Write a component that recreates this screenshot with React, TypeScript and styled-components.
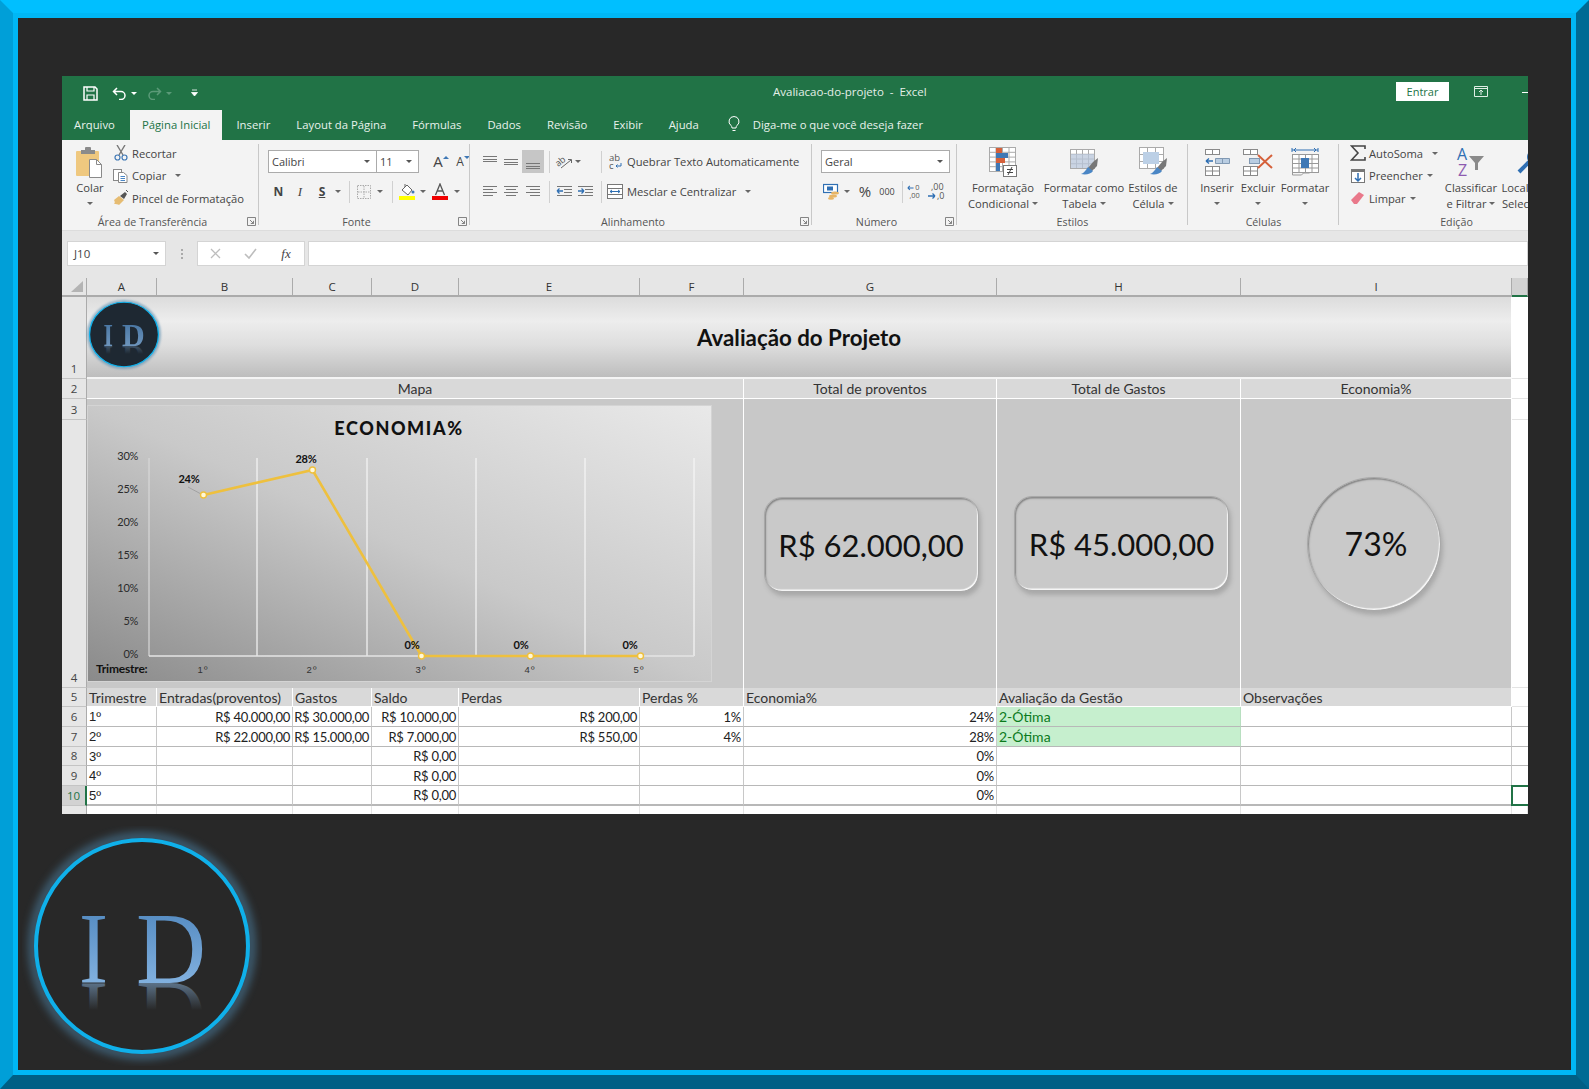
import React from 'react';
import styled, { createGlobalStyle } from 'styled-components';

const Global = createGlobalStyle`
  html, body { margin: 0; padding: 0; width: 1589px; height: 1089px; overflow: hidden; background: #282828; }
  * { box-sizing: border-box; }
`;

const UI = `"Open Sans", "Noto Sans", sans-serif`;
const CELL = `Lato, "Open Sans", sans-serif`;

const Bevel = styled.div`
  width: 1589px; height: 1089px;
  border-style: solid;
  border-width: 13px 13px 14px 13px;
  border-color: #00bfff #006a94 #005f85 #009fd8;
`;
const Stage = styled.div`
  height: 100%;
  border: 5px solid #00b7f5;
  background: #282828;
  padding: 58px 0 0 44px;
`;
const Win = styled.div`
  width: 1466px; height: 738px; overflow: hidden; background: #e6e6e6;
  font-family: ${UI}; color: #444; display: flex; flex-direction: column;
`;
const TitleBar = styled.div`
  height: 34px; flex: none; background: #217346; display: flex; align-items: center; position: relative; color: #fff;
`;
const Qat = styled.div`display: flex; align-items: center; padding: 0 0 0 20px;`;
const QatSlot = styled.span<{ $w: number; $ml?: number }>`
  width: ${p => p.$w}px; margin-left: ${p => p.$ml ?? 0}px; display: flex; justify-content: center; align-items: center;
`;
const DocTitle = styled.div`
  position: absolute; left: 711px; top: 7px; font-size: 11.5px; line-height: 17px; color: #e4efe8; white-space: pre;
`;
const SignIn = styled.div`
  position: absolute; left: 1334px; top: 6px; width: 53px; height: 19px; background: #fff; color: #217346;
  font-size: 11px; line-height: 19px; text-align: center;
`;
const WinButtons = styled.div`position: absolute; left: 1412px; top: 9px; display: flex; align-items: center;`;
const Minimize = styled.span`position: absolute; left: 48px; top: 7px; width: 8px; height: 1px; background: #fff;`;
const TabBar = styled.div`
  height: 30px; flex: none; background: #217346; display: flex; align-items: stretch; font-size: 11.3px; color: #e8f2ec; white-space: nowrap;
`;
const Tab = styled.div<{ $left: number; $active?: boolean }>`
  margin-left: ${p => p.$left}px;
  padding: 0 ${p => (p.$active ? 12 : 0)}px 2px;
  display: flex; align-items: center;
  ${p => p.$active ? 'background:#f3f3f3;color:#217346;' : ''}
`;
const Ribbon = styled.div`
  height: 91px; flex: none; background: #f3f3f3; display: flex; border-bottom: 1px solid #dcdcdc;
  font-size: 11.2px; color: #444; white-space: nowrap;
`;
const Group = styled.div<{ $w: number; $noLine?: boolean }>`
  position: relative; flex: none; width: ${p => p.$w}px; display: flex; flex-direction: column;
  ${p => p.$noLine ? '' : `&::after { content: ''; position: absolute; right: 0; top: 4px; bottom: 5px; width: 1px; background: #c8c8c8; }`}
`;
const GroupBody = styled.div<{ $pl: number; $pt?: number; $col?: boolean }>`
  flex: 1; display: flex; ${p => p.$col ? 'flex-direction: column;' : ''} padding: ${p => p.$pt ?? 0}px 0 0 ${p => p.$pl}px; min-height: 0;
`;
const GroupLabel = styled.div<{ $launcher?: boolean }>`
  height: 18px; flex: none; text-align: center; line-height: 18px; padding-top: 1px; font-size: 10.7px; color: #555;
  padding-right: ${p => (p.$launcher ? 16 : 0)}px;
`;
const Launcher = styled.svg`position: absolute; right: 3px; bottom: 4px; width: 9px; height: 9px;`;
const BigButton = styled.div<{ $w: number }>`
  width: ${p => p.$w}px; flex: none; padding-top: 7px; display: flex; flex-direction: column; align-items: center; text-align: center; line-height: 15.5px;
`;
const BigIcon = styled.div`height: 30px; margin-bottom: 3px; display: flex; align-items: center; justify-content: center;`;
const SmallCol = styled.div<{ $ml: number; $w?: number }>`
  margin-left: ${p => p.$ml}px; padding-top: 2px; display: grid; grid-auto-rows: 22.5px; ${p => p.$w ? `width:${p.$w}px;flex:none;` : ''}
`;
const SmallBtn = styled.div`display: flex; align-items: center;`;
const SmallIcon = styled.span`width: 16px; height: 16px; margin-right: 3px; display: flex; align-items: center; justify-content: center; flex: none;`;
const Caret = styled.i<{ $ml?: number; $mt?: number; $dark?: boolean }>`
  display: inline-block; width: 0; height: 0; border-left: 3px solid transparent; border-right: 3px solid transparent;
  border-top: 3px solid ${p => p.$dark ? '#555' : '#666'}; margin-left: ${p => p.$ml ?? 0}px; margin-top: ${p => p.$mt ?? 0}px; flex: none;
  vertical-align: middle;
`;
const UpMark = styled.i`
  width: 0; height: 0; border-left: 3px solid transparent; border-right: 3px solid transparent; margin-bottom: 9px;
  border-bottom: 3px solid #3f78b5;
`;
const DownMark = styled.i`
  width: 0; height: 0; border-left: 3px solid transparent; border-right: 3px solid transparent; margin-bottom: 9px;
  border-top: 3px solid #3f78b5;
`;
const CaretLine = styled.div`height: 15px; display: flex; align-items: center; justify-content: center;`;
const ToolRow = styled.div<{ $mt?: number }>`
  display: flex; align-items: center; height: 23px; margin-top: ${p => p.$mt ?? 0}px;
`;
const Tool = styled.span<{ $w: number; $ml?: number; $on?: boolean }>`
  width: ${p => p.$w}px; margin-left: ${p => p.$ml ?? 0}px; height: 23px; flex: none; display: flex; align-items: center; justify-content: center;
  ${p => p.$on ? 'background:#c6c6c6;' : ''}
`;
const Sep = styled.span<{ $w: number; $ml?: number }>`
  width: ${p => p.$w}px; margin-left: ${p => p.$ml ?? 0}px; height: 22px; flex: none; position: relative;
  &::after { content: ''; position: absolute; left: 50%; top: 0; bottom: 0; width: 1px; background: #d0d0d0; }
`;
const Select = styled.div<{ $w: number; $joined?: boolean }>`
  width: ${p => p.$w}px; height: 23px; flex: none; background: #fff; border: 1px solid #ababab; ${p => p.$joined ? 'border-left: none;' : ''}
  display: flex; align-items: center; justify-content: space-between; padding: 0 6px 0 3px; font-size: 11px; color: #444;
`;
const ToolLabel = styled.span`margin-left: 3px; color: #444;`;
const Glyph = styled.span<{ $size?: number; $bold?: boolean; $italic?: boolean; $u?: boolean; $serif?: boolean }>`
  font-size: ${p => p.$size ?? 12}px; font-weight: ${p => p.$bold ? 700 : 400}; font-style: ${p => p.$italic ? 'italic' : 'normal'};
  ${p => p.$u ? 'text-decoration: underline;' : ''} ${p => p.$serif ? 'font-family: "Liberation Serif", serif;' : ''} color: #444; line-height: 1;
`;

const Band = styled.div`
  height: 47px; flex: none; background: #e6e6e6; padding-top: 10px; display: flex; align-items: flex-start;
`;
const NameBox = styled.div`
  margin-left: 5px; width: 99px; height: 25px; background: #fff; border: 1px solid #d4d4d4; display: flex; align-items: center; justify-content: space-between;
  padding: 0 6px; font-size: 11.5px; color: #444; flex: none;
`;
const Dots = styled.div`width: 31px; height: 25px; flex: none; display: flex; flex-direction: column; align-items: center; justify-content: center; gap: 2px;
  span { width: 2px; height: 2px; background: #aaa; }
`;
const FxBox = styled.div`
  width: 108px; height: 25px; flex: none; background: #fff; border: 1px solid #d4d4d4; display: flex; align-items: center; padding-left: 10px;
`;
const FxSlot = styled.span<{ $w: number; $ml?: number }>`
  width: ${p => p.$w}px; margin-left: ${p => p.$ml ?? 0}px; flex: none; display: flex; justify-content: center; align-items: center;
`;
const FormulaInput = styled.div`margin-left: 3px; flex: 1; height: 25px; background: #fff; border: 1px solid #d4d4d4;`;

const Sheet = styled.div`
  display: grid;
  grid-template-columns: 25px 70px 136px 79px 87px 181px 104px 253px 244px 271px 16px;
  grid-template-rows: 19px 82px 20px 21px 268px 19px 20px 20px 19px 20px 20px 8px;
  background: #fff; font-family: ${CELL}; font-size: 14px; color: #222;
`;
const Corner = styled.div`
  background: #e6e6e6; border-bottom: 2px solid #ababab; border-right: 1px solid #ababab; position: relative;
  &::after { content: ''; position: absolute; right: 3px; bottom: 3px; width: 12px; height: 11px; background: #b4b4b4; clip-path: polygon(100% 0, 100% 100%, 0 100%); }
`;
const ColHead = styled.div<{ $sel?: boolean }>`
  background: ${p => p.$sel ? '#d2d2d2' : '#e6e6e6'};
  border-bottom: 2px solid ${p => p.$sel ? '#217346' : '#ababab'}; border-right: 1px solid #ababab;
  display: flex; align-items: center; justify-content: center; font-family: ${UI}; font-size: 11.5px; color: #333;
`;
const RowHead = styled.div<{ $sel?: boolean }>`
  background: ${p => p.$sel ? '#d2d2d2' : '#e6e6e6'};
  border-bottom: 1px solid #c4c4c4; border-right: ${p => p.$sel ? '2px solid #217346' : '1px solid #ababab'};
  color: ${p => p.$sel ? '#217346' : '#444'};
  display: flex; align-items: flex-end; justify-content: center; font-family: ${UI}; font-size: 11.5px; line-height: 18px;
`;
const Banner = styled.div`
  grid-column: span 9; position: relative; border-right: 1px solid #fff; border-bottom: 2px solid #f4f4f4;
  background: linear-gradient(180deg, #dcdcdc 0%, #ededed 30%, #dedede 60%, #bdbdbd 100%);
  display: flex; align-items: center; justify-content: center;
  font-size: 22.3px; font-weight: 700; color: #111;
`;
const SmallLogo = styled.div`position: absolute; left: -2px; top: 1px;`;
const HeadCell = styled.div<{ $span?: number; $left?: boolean }>`
  ${p => p.$span ? `grid-column: span ${p.$span};` : ''}
  background: #d9d9d9; border-right: 1px solid #fff; border-bottom: 1px solid #fff;
  display: flex; align-items: center; justify-content: ${p => p.$left ? 'flex-start' : 'center'};
  padding: 0 2px; color: #333; white-space: nowrap; overflow: hidden;
`;
const Empty = styled.div<{ $line?: string }>`background: #fff; border-bottom: 1px solid ${p => p.$line ?? '#e4e4e4'};`;
const ChartCell = styled.div`
  grid-column: span 6; grid-row: span 2; background: #c8c8c8; border-right: 1px solid #fff; padding-top: 6px;
`;
const ChartCard = styled.div`
  width: 625px; height: 277px; border: 1px solid #d4d4d4;
  background: linear-gradient(to top right, #8a8a8a 0%, #c9c9c9 50%, #e9e9e9 100%);
`;
const KpiCell = styled.div`
  grid-row: span 2; background: #c8c8c8; border-right: 1px solid #fff; display: flex; align-items: center; justify-content: center;
`;
const Kpi = styled.div<{ $w: number; $h: number; $round?: boolean; $dx?: number; $dy?: number }>`
  width: ${p => p.$w}px; height: ${p => p.$h}px; border-radius: ${p => p.$round ? '50%' : '18px'};
  margin: ${p => (p.$dy ?? 0) * 2}px 0 0 ${p => (p.$dx ?? 0) * 2}px;
  padding-left: ${p => p.$round ? 4 : 0}px;
  background: #c9c9c9; border: 1px solid #a8a8a8;
  box-shadow: inset 1px 1.5px 1.5px rgba(70,70,70,.5), inset -1px -1.5px 1px rgba(255,255,255,.9), 2px 4px 4px rgba(130,130,130,.45);
  display: flex; align-items: center; justify-content: center; font-size: ${p => p.$round ? 32 : 31}px; color: #111;
`;
const Cell = styled.div<{ $num?: boolean; $good?: boolean; $heavy?: boolean }>`
  background: ${p => p.$good ? '#c6efce' : '#fff'}; color: ${p => p.$good ? '#0b7a1c' : '#222'};
  border-right: 1px solid ${p => p.$good ? '#b8dfc0' : '#c8c8c8'}; border-bottom: ${p => p.$heavy ? 2 : 1}px solid #b8b8b8;
  display: flex; align-items: center; justify-content: ${p => p.$num ? 'flex-end' : 'flex-start'};
  padding: 0 2px; white-space: nowrap; overflow: hidden;
  ${p => p.$num ? 'font-size: 13px; letter-spacing: -0.25px;' : ''}
`;
const Ordinal = styled.span`font-family: "Liberation Sans", sans-serif; font-size: 13px;`;
const Selected = styled.div`background: #fff; border: 2px solid #217346; border-right: none; margin: -1px 0 0 -1px;`;
const Stub = styled.div`background: #fff; border-right: 1px solid #e4e4e4;`;
const StubHead = styled.div`background: #e6e6e6; border-right: 1px solid #ababab;`;
const BigLogo = styled.div`margin: 12px 0 0 -40px;`;

const Logo = ({ id, w, h, fill, dim }: { id: string; w: number; h: number; fill: string; dim?: boolean }) => (
  <svg width={w} height={h} viewBox="0 0 240 240" preserveAspectRatio="none">
    <defs>
      <linearGradient id={`${id}-l`} x1="0" y1="0" x2="0" y2="1">
        <stop offset="0" stopColor="#4a82ba" /><stop offset="1" stopColor="#8fbce8" />
      </linearGradient>
      <linearGradient id={`${id}-r`} gradientUnits="userSpaceOnUse" x1="0" y1="157" x2="0" y2="130">
        <stop offset="0" stopColor="#8fbce8" stopOpacity={dim ? '.3' : '.5'} /><stop offset="1" stopColor="#8fbce8" stopOpacity="0" />
      </linearGradient>
      <filter id={`${id}-g`} x="-20%" y="-20%" width="140%" height="140%"><feGaussianBlur stdDeviation="4" /></filter>
    </defs>
    <circle cx="120" cy="120" r="109" fill="none" stroke="#4f88ad" strokeWidth="9" opacity=".6" filter={`url(#${id}-g)`} />
    <circle cx="120" cy="120" r="106" fill={fill} stroke="#0fb0ea" strokeWidth="4" />
    <g fontFamily="'Liberation Serif', serif" fontSize="101" fill={`url(#${id}-l)`} opacity={dim ? .8 : 1}>
      <text x="57" y="157" textLength="29" lengthAdjust="spacingAndGlyphs">I</text>
      <text x="114" y="157" textLength="70" lengthAdjust="spacingAndGlyphs">D</text>
    </g>
    <g transform="translate(0 314) scale(1 -1)" fontFamily="'Liberation Serif', serif" fontSize="101" fill={`url(#${id}-r)`}>
      <text x="57" y="157" textLength="29" lengthAdjust="spacingAndGlyphs">I</text>
      <text x="114" y="157" textLength="70" lengthAdjust="spacingAndGlyphs">D</text>
    </g>
  </svg>
);

const Lnch = () => (
  <Launcher viewBox="0 0 9 9"><path d="M.5.5h8v8h-8zM3 3l3.5 3.5M6.500 3.800v2.700H3.800" fill="none" stroke="#777" strokeWidth=".9" /></Launcher>
);
const Ic = ({ w = 16, h = 16, children }: { w?: number; h?: number; children: React.ReactNode }) => (
  <svg width={w} height={h} viewBox={`0 0 ${w} ${h}`} fill="none">{children}</svg>
);
const Lines = ({ rows }: { rows: [number, number, number][] }) => (
  <Ic>{rows.map(([y, x, len], i) => <path key={i} d={`M${x} ${y}h${len}`} stroke="#777" strokeWidth="1" />)}</Ic>
);
const Grid = ({ x, y, w, h, cx, cy, s = '#8a8a8a' }: { x: number; y: number; w: number; h: number; cx: number; cy: number; s?: string }) => (
  <g stroke={s} strokeWidth="1">
    <rect x={x + .5} y={y + .5} width={w} height={h} fill="#fff" />
    {Array.from({ length: cx - 1 }, (_, i) => <path key={`a${i}`} d={`M${x + .5 + (w * (i + 1)) / cx} ${y}v${h}`} />)}
    {Array.from({ length: cy - 1 }, (_, i) => <path key={`b${i}`} d={`M${x} ${y + .5 + (h * (i + 1)) / cy}h${w}`} />)}
  </g>
);
const Brush = ({ x, y }: { x: number; y: number }) => (
  <g transform={`translate(${x} ${y})`}>
    <path d="M16 0l-1 8-5 5-4-3 5-6z" fill="#777" />
    <path d="M6 9l5 4c-2 3-7 4-12 3 3-1 5-4 7-7z" fill="#4a86c5" />
  </g>
);
const Dec = ({ top, bottom, dir }: { top: string; bottom: string; dir: 'l' | 'r' }) => (
  <Ic w={22} h={18}>
    <path d={dir === 'l' ? 'M1 4h7M1 4l2.500-2.500M1 4l2.500 2.500' : 'M1 13h7M8 13l-2.500-2.500M8 13l-2.500 2.500'} stroke="#2f6fb3" strokeWidth="1.300" />
    <text x={dir === 'l' ? 10 : 4} y="7" fontFamily="Open Sans, sans-serif" fontSize="9" fill="#555">{top}</text>
    <text x={dir === 'l' ? 3 : 10} y="16" fontFamily="Open Sans, sans-serif" fontSize="9" fill="#555">{bottom}</text>
  </Ic>
);

const rows = [
  { n: 6, a: '1º', b: 'R$ 40.000,00', c: 'R$ 30.000,00', d: 'R$ 10.000,00', e: 'R$ 200,00', f: '1%', g: '24%', h: '2-Ótima' },
  { n: 7, a: '2º', b: 'R$ 22.000,00', c: 'R$ 15.000,00', d: 'R$ 7.000,00', e: 'R$ 550,00', f: '4%', g: '28%', h: '2-Ótima' },
  { n: 8, a: '3º', b: '', c: '', d: 'R$ 0,00', e: '', f: '', g: '0%', h: '' },
  { n: 9, a: '4º', b: '', c: '', d: 'R$ 0,00', e: '', f: '', g: '0%', h: '' },
  { n: 10, a: '5º', b: '', c: '', d: 'R$ 0,00', e: '', f: '', g: '0%', h: '' },
];

const Chart = () => {
  const gx = [61, 169, 279, 388, 497, 606];
  const yl = ['30%', '25%', '20%', '15%', '10%', '5%', '0%'];
  const pts = [[115.5, 89], [224.5, 64], [333.5, 250], [442.5, 250], [552.5, 250]];
  const lab = [['24%', 101, 73], ['28%', 218, 53], ['0%', 324, 239], ['0%', 433, 239], ['0%', 542, 239]];
  return (
    <svg width="623" height="275" viewBox="0 0 623 275" fontFamily="Lato, sans-serif">
      <text x="311" y="29" textAnchor="middle" fontSize="18" fontWeight="900" letterSpacing="1.600" fill="#111">ECONOMIA%</text>
      {gx.map((x, i) => <path key={x} d={`M${x} 52V250`} stroke={i === 0 ? '#d8d8d8' : '#f6f6f6'} strokeWidth="1.200" />)}
      <path d="M61 250H606" stroke="#e4e4e4" strokeWidth="1.500" />
      {yl.map((t, i) => <text key={t} x="50" y={54 + i * 33} textAnchor="end" fontSize="11" fill="#2a2a2a" letterSpacing="-.3">{t}</text>)}
      <path d="M100 81L113 88" stroke="#999" strokeWidth=".8" />
      <polyline points={pts.map(p => p.join(',')).join(' ')} fill="none" stroke="#eec03e" strokeWidth="2.600" />
      {pts.map(([x, y]) => <circle key={x} cx={x} cy={y} r="3" fill="#fff8d8" stroke="#eec03e" strokeWidth="1.400" />)}
      {lab.map(([t, x, y], i) => <text key={i} x={x as number} y={(y as number) + 4} textAnchor="middle" fontSize="11" fontWeight="700" fill="#111" letterSpacing="-.2">{t}</text>)}
      <text x="8" y="267" fontSize="12" fontWeight="700" fill="#111" letterSpacing="-.2">Trimestre:</text>
      {['1º', '2º', '3º', '4º', '5º'].map((t, i) => <text key={t} x={115 + i * 109} y="267" textAnchor="middle" fontFamily="Liberation Sans, sans-serif" fontSize="9.500" fill="#333" letterSpacing="1">{t}</text>)}
    </svg>
  );
};

export default function App() {
  return (
    <>
      <Global />
      <Bevel>
        <Stage>
          <Win>
            <TitleBar>
              <Qat>
                <QatSlot $w={16}>
                  <Ic w={15} h={15}><path d="M1 1h11l2 2v11H1z" stroke="#fff" strokeWidth="1.500" /><path d="M4 1v4h7V1M4 14V9h7v5" stroke="#fff" strokeWidth="1.200" /></Ic>
                </QatSlot>
                <QatSlot $w={20} $ml={11}>
                  <Ic w={15} h={14}><path d="M5 2L1.500 5.500 5 9M2 5.500h7a4 4 0 0 1 0 8H7" stroke="#fff" strokeWidth="1.500" /></Ic>
                </QatSlot>
                <QatSlot $w={10}><Caret style={{ borderTopColor: '#fff' }} /></QatSlot>
                <QatSlot $w={20} $ml={5}>
                  <Ic w={15} h={14}><path d="M10 2l3.500 3.500L10 9M13 5.500H6a4 4 0 0 0 0 8h2" stroke="#5b9a78" strokeWidth="1.500" /></Ic>
                </QatSlot>
                <QatSlot $w={10}><Caret style={{ borderTopColor: '#5b9a78' }} /></QatSlot>
                <QatSlot $w={10} $ml={15}>
                  <Ic w={7} h={8}><path d="M1 1h5M.5 3.500h6l-3 3.500z" stroke="#fff" fill="#fff" strokeWidth=".8" /></Ic>
                </QatSlot>
              </Qat>
              <DocTitle>Avaliacao-do-projeto  -  Excel</DocTitle>
              <SignIn>Entrar</SignIn>
              <WinButtons>
                <Ic w={14} h={12}><path d="M.5 1.500h13v10H.5zM.5 3.500h13" stroke="#dfeee5" /><path d="M7 10V5M5 7l2-2 2 2" stroke="#dfeee5" /></Ic>
                <Minimize />
              </WinButtons>
            </TitleBar>
            <TabBar>
              <Tab $left={12}>Arquivo</Tab>
              <Tab $left={15} $active>Página Inicial</Tab>
              <Tab $left={14}>Inserir</Tab>
              <Tab $left={26}>Layout da Página</Tab>
              <Tab $left={26}>Fórmulas</Tab>
              <Tab $left={26}>Dados</Tab>
              <Tab $left={26}>Revisão</Tab>
              <Tab $left={26}>Exibir</Tab>
              <Tab $left={26}>Ajuda</Tab>
              <Tab $left={28}>
                <Ic w={14} h={18}><path d="M7 1.500a5 5 0 0 0-3 9c.6.6 1 1.500 1 2.500h4c0-1 .4-1.900 1-2.500a5 5 0 0 0-3-9zM5.500 15.500h3" stroke="#fff" strokeWidth="1" /></Ic>
              </Tab>
              <Tab $left={12}>Diga-me o que você deseja fazer</Tab>
            </TabBar>
            <Ribbon>
              <Group $w={197}>
                <GroupBody $pl={12}>
                  <BigButton $w={32}>
                    <BigIcon>
                      <Ic w={30} h={31}>
                        <rect x="1" y="4" width="23" height="25" rx="1" fill="#efc87f" />
                        <rect x="10" y="0" width="6" height="5" rx="1" fill="#8b8b8b" /><rect x="6" y="3" width="14" height="4" fill="#8b8b8b" />
                        <path d="M14.500 12.500h7l5 5v13h-12z" fill="#fff" stroke="#8a8a8a" /><path d="M21.500 12.500v5h5" stroke="#8a8a8a" />
                      </Ic>
                    </BigIcon>
                    <span>Colar</span>
                    <CaretLine><Caret /></CaretLine>
                  </BigButton>
                  <SmallCol $ml={7}>
                    <SmallBtn><SmallIcon>
                      <Ic><path d="M4 0l6 10M12 0L6 10" stroke="#777" strokeWidth="1.400" /><circle cx="4.500" cy="12.500" r="2.500" stroke="#3f78b5" strokeWidth="1.200" /><circle cx="11.500" cy="12.500" r="2.500" stroke="#3f78b5" strokeWidth="1.200" /></Ic>
                    </SmallIcon>Recortar</SmallBtn>
                    <SmallBtn><SmallIcon>
                      <Ic><rect x=".5" y="1.500" width="8" height="11" fill="#fff" stroke="#888" /><path d="M5.500 4.500h5l3.500 3v7h-8.500z" fill="#fff" stroke="#888" /><path d="M7.500 8.500h4.500M7.500 10.500h4.500M7.500 12.500h4.500" stroke="#4a86c5" /></Ic>
                    </SmallIcon>Copiar<Caret $ml={9} /></SmallBtn>
                    <SmallBtn><SmallIcon>
                      <Ic><path d="M1 10l5-4 5 4-5 5c-1-1-3-1-5-1 1-1 1-2 0-4z" fill="#e6bc72" /><path d="M7 6l5-4 2 2-3 5z" fill="#555" /><path d="M13 0l2 2" stroke="#555" /></Ic>
                    </SmallIcon>Pincel de Formatação</SmallBtn>
                  </SmallCol>
                </GroupBody>
                <GroupLabel $launcher>Área de Transferência</GroupLabel>
                <Lnch />
              </Group>
              <Group $w={211}>
                <GroupBody $pl={9} $pt={10} $col>
                  <ToolRow>
                    <Select $w={109}>Calibri<Caret $dark /></Select>
                    <Select $w={42} $joined>11<Caret $dark /></Select>
                    <Tool $w={11} />
                    <Tool $w={22}><Glyph $size={15}>A</Glyph><UpMark /></Tool>
                    <Tool $w={22}><Glyph $size={12}>A</Glyph><DownMark /></Tool>
                  </ToolRow>
                  <ToolRow $mt={7}>
                    <Tool $w={21}><Glyph $bold>N</Glyph></Tool>
                    <Tool $w={22}><Glyph $italic $serif $size={13}>I</Glyph></Tool>
                    <Tool $w={22}><Glyph $bold $u>S</Glyph></Tool>
                    <Tool $w={10}><Caret /></Tool>
                    <Sep $w={12} />
                    <Tool $w={18}><Ic w={14} h={14}><rect x=".5" y=".5" width="13" height="13" stroke="#aaa" strokeDasharray="1.500 1" /><path d="M7 1v12M1 7h12" stroke="#aaa" strokeDasharray="1.500 1" /></Ic></Tool>
                    <Tool $w={14}><Caret /></Tool>
                    <Sep $w={10} />
                    <Tool $w={20}><Ic w={17} h={17}><path d="M3 7l5-5 5 5-4 5z" fill="#fff" stroke="#666" /><path d="M6 4V1" stroke="#666" /><circle cx="14" cy="9" r="1.500" fill="#3f78b5" /><rect x="0" y="13" width="16" height="4" fill="#ffff00" /></Ic></Tool>
                    <Tool $w={12}><Caret /></Tool>
                    <Tool $w={22}><Ic w={17} h={17}><rect x="0" y="13" width="16" height="4" fill="#f00000" /><path d="M3.500 12L8 1l4.500 11M5.500 8h5" stroke="#555" strokeWidth="1.300" /></Ic></Tool>
                    <Tool $w={12}><Caret /></Tool>
                  </ToolRow>
                </GroupBody>
                <GroupLabel $launcher>Fonte</GroupLabel>
                <Lnch />
              </Group>
              <Group $w={342}>
                <GroupBody $pl={9} $pt={10} $col>
                  <ToolRow>
                    <Tool $w={21}><Lines rows={[[2.5, 1, 14], [5.5, 1, 14], [7.5, 1, 14]]} /></Tool>
                    <Tool $w={22}><Lines rows={[[5.5, 1, 14], [8.5, 1, 14], [10.5, 1, 14]]} /></Tool>
                    <Tool $w={22} $on><Lines rows={[[9.5, 1, 14], [12.5, 1, 14], [14.5, 1, 14]]} /></Tool>
                    <Sep $w={10} />
                    <Tool $w={20}>
                      <Ic w={18} h={16}>
                        <text x="1" y="11" transform="rotate(-40 5 9)" fontFamily="Open Sans, sans-serif" fontSize="9" fill="#555">ab</text>
                        <path d="M6 14l10-8M13 5.500h3.500V9" stroke="#666" />
                      </Ic>
                    </Tool>
                    <Tool $w={8}><Caret /></Tool>
                    <Sep $w={14} $ml={12} />
                    <Tool $w={16}>
                      <Ic w={16} h={18}>
                        <text x="1" y="8" fontFamily="Open Sans, sans-serif" fontSize="9.500" fill="#555">ab</text>
                        <text x="1" y="16" fontFamily="Open Sans, sans-serif" fontSize="9.500" fill="#555">c</text>
                        <path d="M13 10v3h-5M8 13l1.500-1.500M8 13l1.500 1.500" stroke="#2f6fb3" />
                      </Ic>
                    </Tool>
                    <ToolLabel>Quebrar Texto Automaticamente</ToolLabel>
                  </ToolRow>
                  <ToolRow $mt={7}>
                    <Tool $w={21}><Lines rows={[[2.5, 1, 14], [5.5, 1, 10], [8.5, 1, 14], [11.5, 1, 10]]} /></Tool>
                    <Tool $w={22}><Lines rows={[[2.5, 1, 14], [5.5, 3, 10], [8.5, 1, 14], [11.5, 3, 10]]} /></Tool>
                    <Tool $w={22}><Lines rows={[[2.5, 1, 14], [5.5, 5, 10], [8.5, 1, 14], [11.5, 5, 10]]} /></Tool>
                    <Sep $w={10} />
                    <Tool $w={20}><Ic w={17} h={14}><path d="M1 1.500h15M8 4.500h8M8 7.500h8M1 10.500h15" stroke="#777" /><path d="M7 6H1M1 6l2.500-2.500M1 6l2.500 2.500" stroke="#2f6fb3" strokeWidth="1.300" /></Ic></Tool>
                    <Tool $w={22}><Ic w={17} h={14}><path d="M1 1.500h15M8 4.500h8M8 7.500h8M1 10.500h15" stroke="#777" /><path d="M1 6h6M7 6L4.500 3.500M7 6L4.500 8.500" stroke="#2f6fb3" strokeWidth="1.300" /></Ic></Tool>
                    <Sep $w={10} />
                    <Tool $w={18}><Ic w={16} h={15}><rect x=".5" y=".5" width="15" height="14" fill="#fff" stroke="#777" /><path d="M1 4.500h14M1 10.500h14" stroke="#777" /><path d="M3 7.500h10M3 7.500l2-1.500M3 7.500l2 1.500M13 7.500l-2-1.500M13 7.500l-2 1.500" stroke="#2f6fb3" /></Ic></Tool>
                    <ToolLabel>Mesclar e Centralizar</ToolLabel>
                    <Caret $ml={9} />
                  </ToolRow>
                </GroupBody>
                <GroupLabel $launcher>Alinhamento</GroupLabel>
                <Lnch />
              </Group>
              <Group $w={145}>
                <GroupBody $pl={9} $pt={10} $col>
                  <ToolRow><Select $w={129}>Geral<Caret $dark /></Select></ToolRow>
                  <ToolRow $mt={7}>
                    <Tool $w={20}><Ic w={17} h={17}><rect x=".5" y="1.500" width="14" height="8" fill="#fff" stroke="#2f6fb3" strokeWidth="1.200" /><rect x="4" y="3.500" width="6" height="4" fill="#2f6fb3" /><ellipse cx="12" cy="10" rx="4" ry="1.600" fill="#e8b565" /><ellipse cx="10" cy="13" rx="4" ry="1.600" fill="#e8b565" /><ellipse cx="8" cy="15.400" rx="3" ry="1.400" fill="#e8b565" /></Ic></Tool>
                    <Tool $w={12}><Caret /></Tool>
                    <Tool $w={24}><Glyph $size={15}>%</Glyph></Tool>
                    <Tool $w={20}><Glyph $size={9}>000</Glyph></Tool>
                    <Sep $w={10} />
                    <Tool $w={18}><Dec top="0" bottom=",00" dir="l" /></Tool>
                    <Tool $w={26}><Dec top=",00" bottom=",0" dir="r" /></Tool>
                  </ToolRow>
                </GroupBody>
                <GroupLabel $launcher>Número</GroupLabel>
                <Lnch />
              </Group>
              <Group $w={231}>
                <GroupBody $pl={9}>
                  <BigButton $w={74}>
                    <BigIcon>
                      <Ic w={30} h={30}>
                        <Grid x={1} y={0} w={26} h={24} cx={4} cy={5} s="#aaa" />
                        <rect x="8" y="1" width="6" height="5" fill="#d5603a" /><rect x="8" y="6" width="12" height="5" fill="#3f78b5" /><rect x="8" y="11" width="9" height="5" fill="#d5603a" /><rect x="8" y="16" width="4" height="8" fill="#3f78b5" />
                        <rect x="15.500" y="18.500" width="13" height="11" fill="#fff" stroke="#777" /><path d="M19 22.500h6M19 25.500h6M24 20l-4 8" stroke="#444" />
                      </Ic>
                    </BigIcon>
                    <span>Formatação</span>
                    <span>Condicional<Caret $ml={3} $mt={-2} /></span>
                  </BigButton>
                  <BigButton $w={88}>
                    <BigIcon>
                      <Ic w={30} h={30}>
                        <Grid x={1} y={2} w={24} h={19} cx={4} cy={4} s="#aaa" />
                        <rect x="2" y="7" width="23" height="14" fill="#b8c6da" opacity=".75" />
                        <Brush x={13} y={11} />
                      </Ic>
                    </BigIcon>
                    <span>Formatar como</span>
                    <span>Tabela<Caret $ml={3} $mt={-2} /></span>
                  </BigButton>
                  <BigButton $w={50}>
                    <BigIcon>
                      <Ic w={30} h={30}>
                        <Grid x={1} y={0} w={24} h={21} cx={3} cy={3} s="#aaa" />
                        <rect x="5" y="5" width="16" height="12" fill="#bcd0e6" />
                        <Brush x={13} y={11} />
                      </Ic>
                    </BigIcon>
                    <span>Estilos de</span>
                    <span>Célula<Caret $ml={3} $mt={-2} /></span>
                  </BigButton>
                </GroupBody>
                <GroupLabel>Estilos</GroupLabel>
              </Group>
              <Group $w={151}>
                <GroupBody $pl={12}>
                  <BigButton $w={34}>
                    <BigIcon>
                      <Ic w={27} h={28}>
                        <Grid x={1} y={1} w={14} h={5} cx={2} cy={1} />
                        <Grid x={1} y={18} w={14} h={9} cx={2} cy={2} />
                        <path d="M11.500 10.500h14v5h-14zM18.500 10.500v5" fill="#b9cde2" stroke="#8199b3" />
                        <path d="M2 13h7M2 13l3-2.500M2 13l3 2.500" stroke="#2f6fb3" strokeWidth="1.400" />
                      </Ic>
                    </BigIcon>
                    <span>Inserir</span>
                    <CaretLine><Caret /></CaretLine>
                  </BigButton>
                  <BigButton $w={48}>
                    <BigIcon>
                      <Ic w={32} h={28}>
                        <Grid x={1} y={1} w={14} h={5} cx={2} cy={1} />
                        <Grid x={1} y={18} w={14} h={9} cx={2} cy={2} />
                        <rect x="7.500" y="10.500" width="10" height="5" fill="#b9cde2" stroke="#8199b3" />
                        <path d="M16 7l14 13M30 7L16 20" stroke="#d5603a" strokeWidth="2" />
                      </Ic>
                    </BigIcon>
                    <span>Excluir</span>
                    <CaretLine><Caret /></CaretLine>
                  </BigButton>
                  <BigButton $w={46}>
                    <BigIcon>
                      <Ic w={28} h={30}>
                        <path d="M1 3h26M1 1v4M27 1v4M3 3l2-2M3 3l2 2M25 3l-2-2M25 3l-2 2" stroke="#2f6fb3" />
                        <Grid x={1} y={7} w={26} h={18} cx={4} cy={4} s="#999" />
                        <rect x="10" y="11" width="8" height="10" fill="#3f78b5" />
                        <path d="M1.500 25v3h9l2-2h6" stroke="#999" />
                      </Ic>
                    </BigIcon>
                    <span>Formatar</span>
                    <CaretLine><Caret /></CaretLine>
                  </BigButton>
                </GroupBody>
                <GroupLabel>Células</GroupLabel>
              </Group>
              <Group $w={235} $noLine>
                <GroupBody $pl={11}>
                  <SmallCol $ml={0} $w={93}>
                    <SmallBtn><SmallIcon><Ic><path d="M15 4V1H1.500l6.500 7-6.500 7H15v-3" stroke="#444" strokeWidth="1.600" /></Ic></SmallIcon>AutoSoma<Caret $ml={9} /></SmallBtn>
                    <SmallBtn><SmallIcon><Ic><rect x="1.500" y="1.500" width="13" height="13" fill="#fff" stroke="#777" /><rect x="1" y="1" width="14" height="3" fill="#777" /><path d="M8 5v8M5 10l3 3 3-3" stroke="#2f6fb3" strokeWidth="1.500" /></Ic></SmallIcon>Preencher<Caret $ml={4} /></SmallBtn>
                    <SmallBtn><SmallIcon><Ic><path d="M1 10l8-8 5 3-7 9H4z" fill="#e9788a" /></Ic></SmallIcon>Limpar<Caret $ml={4} /></SmallBtn>
                  </SmallCol>
                  <BigButton $w={56}>
                    <BigIcon>
                      <Ic w={30} h={30}>
                        <text x="1" y="13" fontFamily="Open Sans, sans-serif" fontSize="16" fill="#2f6fb3">A</text>
                        <text x="2" y="29" fontFamily="Open Sans, sans-serif" fontSize="16" fill="#8e5bb0">Z</text>
                        <path d="M13 9h15l-6 7v7h-3v-7z" fill="#8a8a8a" />
                      </Ic>
                    </BigIcon>
                    <span>Classificar</span>
                    <span>e Filtrar<Caret $ml={3} $mt={-2} /></span>
                  </BigButton>
                  <BigButton $w={60}>
                    <BigIcon>
                      <Ic w={30} h={30}><circle cx="20" cy="10" r="6" stroke="#2f6fb3" strokeWidth="2" /><path d="M15 15L5 25" stroke="#2f6fb3" strokeWidth="4" /></Ic>
                    </BigIcon>
                    <span>Localizar e</span>
                    <span>Selecionar</span>
                  </BigButton>
                </GroupBody>
                <GroupLabel>Edição</GroupLabel>
              </Group>
            </Ribbon>
            <Band>
              <NameBox>J10<Caret $dark /></NameBox>
              <Dots><span /><span /><span /></Dots>
              <FxBox>
                <FxSlot $w={14}><Ic w={11} h={11}><path d="M1 1l9 9M10 1l-9 9" stroke="#bdbdbd" strokeWidth="1.300" /></Ic></FxSlot>
                <FxSlot $w={36} $ml={10}><Ic w={13} h={11}><path d="M1 6l4 4 7-9" stroke="#bdbdbd" strokeWidth="1.600" /></Ic></FxSlot>
                <FxSlot $w={20} $ml={8}><Glyph $italic $serif $size={13}>fx</Glyph></FxSlot>
              </FxBox>
              <FormulaInput />
            </Band>
            <Sheet>
              <Corner />
              {['A', 'B', 'C', 'D', 'E', 'F', 'G', 'H', 'I'].map(c => <ColHead key={c}>{c}</ColHead>)}
              <ColHead $sel />

              <RowHead>1</RowHead>
              <Banner>
                <SmallLogo><Logo id="small" w={78} h={73} fill="#1e2832" dim /></SmallLogo>
                Avaliação do Projeto
              </Banner>
              <Empty />

              <RowHead>2</RowHead>
              <HeadCell $span={6}>Mapa</HeadCell>
              <HeadCell>Total de proventos</HeadCell>
              <HeadCell>Total de Gastos</HeadCell>
              <HeadCell>Economia%</HeadCell>
              <Empty />

              <RowHead>3</RowHead>
              <ChartCell><ChartCard><Chart /></ChartCard></ChartCell>
              <KpiCell><Kpi $w={215} $h={95} $dx={1} $dy={1}>R$ 62.000,00</Kpi></KpiCell>
              <KpiCell><Kpi $w={215} $h={95} $dx={3}>R$ 45.000,00</Kpi></KpiCell>
              <KpiCell><Kpi $w={134} $h={134} $round $dx={-2}>73%</Kpi></KpiCell>
              <Empty />
              <RowHead>4</RowHead>
              <Empty />

              <RowHead>5</RowHead>
              {['Trimestre', 'Entradas(proventos)', 'Gastos', 'Saldo', 'Perdas', 'Perdas %', 'Economia%', 'Avaliação da Gestão', 'Observações'].map(h => (
                <HeadCell key={h} $left>{h}</HeadCell>
              ))}
              <Empty />

              {rows.map(r => {
                const heavy = r.n === 10;
                return (
                  <React.Fragment key={r.n}>
                    <RowHead $sel={heavy}>{r.n}</RowHead>
                    <Cell $heavy={heavy}><Ordinal>{r.a}</Ordinal></Cell>
                    <Cell $num $heavy={heavy}>{r.b}</Cell>
                    <Cell $num $heavy={heavy}>{r.c}</Cell>
                    <Cell $num $heavy={heavy}>{r.d}</Cell>
                    <Cell $num $heavy={heavy}>{r.e}</Cell>
                    <Cell $num $heavy={heavy}>{r.f}</Cell>
                    <Cell $num $heavy={heavy}>{r.g}</Cell>
                    <Cell $good={!!r.h} $heavy={heavy}>{r.h}</Cell>
                    <Cell $heavy={heavy} />
                    {heavy ? <Selected /> : <Empty $line="#b8b8b8" />}
                  </React.Fragment>
                );
              })}

              <StubHead />
              {Array.from({ length: 10 }, (_, i) => <Stub key={i} />)}
            </Sheet>
          </Win>
          <BigLogo>
            <Logo id="big" w={240} h={240} fill="#282828" />
          </BigLogo>
        </Stage>
      </Bevel>
    </>
  );
}
